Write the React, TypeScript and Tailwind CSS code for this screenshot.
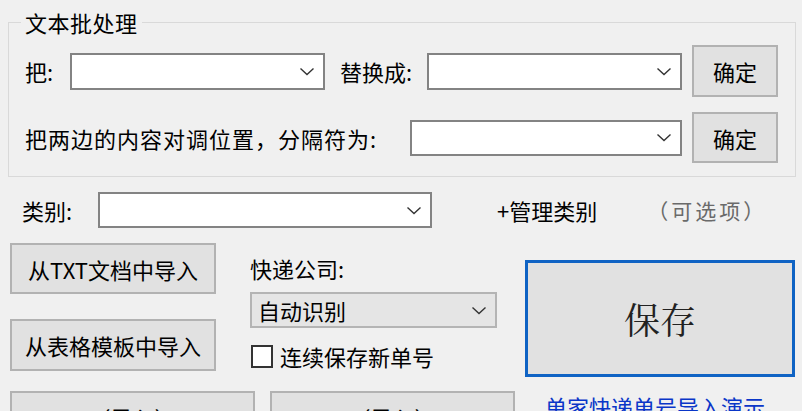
import React from "react";

const FONT = '"Noto Sans CJK SC", "Microsoft YaHei", sans-serif';

function Chevron() {
  return (
    <svg width="16" height="9" viewBox="0 0 16 9" className="shrink-0">
      <path d="M1.5 1.5 L8 7.5 L14.5 1.5" fill="none" stroke="#333" strokeWidth="1.4" />
    </svg>
  );
}

function Combo({ className, text, gray }: { className: string; text?: string; gray?: boolean }) {
  return (
    <div
      className={
        "flex items-center justify-between pr-[8px] pl-[6px] " +
        (gray ? "bg-[#e5e5e5] border-2 border-[#b4b4b4] " : "bg-white border-2 border-[#838383] ") +
        className
      }
    >
      <span className="text-[22px] leading-none text-black">{text}</span>
      <Chevron />
    </div>
  );
}

function Btn({ className, children }: { className: string; children: React.ReactNode }) {
  return (
    <button
      type="button"
      className={
        "flex items-center justify-center bg-[#e1e1e1] border-2 border-[#b2b2b2] text-[22px] leading-none text-black " +
        className
      }
    >
      {children}
    </button>
  );
}

export default function App() {
  return (
    <div
      className="w-[802px] h-[411px] overflow-hidden bg-[#f0f0f0] text-black"
      style={{ fontFamily: FONT }}
    >
      <fieldset className="ml-[8px] mt-[11px] w-[788px] h-[166px] border border-[#d9d9d9]">
        <legend className="ml-[12px] px-[4px] text-[22px] leading-[22px] tracking-[0.5px]">文本批处理</legend>

        <div className="mt-[12px] h-[52px] flex items-center pl-[16px]">
          <span className="w-[45px] text-[22px] leading-none">把:</span>
          <Combo className="w-[255px] h-[37px]" />
          <span className="w-[102px] pl-[15px] text-[22px] leading-none">替换成:</span>
          <Combo className="w-[255px] h-[37px]" />
          <Btn className="ml-[10px] w-[86px] h-[52px]">确定</Btn>
        </div>

        <div className="mt-[15px] h-[51px] flex items-center pl-[16px]">
          <span className="w-[385px] text-[22px] leading-none tracking-[1px]">把两边的内容对调位置，分隔符为:</span>
          <Combo className="w-[272px] h-[36px]" />
          <Btn className="ml-[10px] w-[86px] h-[51px]">确定</Btn>
        </div>
      </fieldset>

      <div className="mt-[15px] h-[36px] flex items-center pl-[22px]">
        <span className="w-[76px] text-[22px] leading-none">类别:</span>
        <Combo className="w-[334px] h-[36px]" />
        <span className="ml-[65px] text-[22px] leading-none">+管理类别</span>
        <span className="ml-[50px] text-[21px] leading-none tracking-[3px] text-[#6a6a6a]">（可选项）</span>
      </div>

      <div className="mt-[15px] flex pl-[10px]">
        <div className="w-[505px] flex flex-col">
          <div className="flex">
            <div className="w-[206px] flex flex-col gap-[25px]">
              <Btn className="w-[206px] h-[51px]">从TXT文档中导入</Btn>
              <Btn className="w-[206px] h-[52px]">从表格模板中导入</Btn>
            </div>
            <div className="ml-[34px] w-[247px] flex flex-col">
              <span className="mt-[14px] text-[22px] leading-[22px]">快递公司:</span>
              <Combo gray text="自动识别" className="mt-[13px] w-[247px] h-[36px]" />
              <label className="mt-[16px] h-[24px] flex items-center gap-[7px]">
                <span className="ml-[1px] w-[22px] h-[23px] bg-white border-2 border-[#333]" />
                <span className="text-[22px] leading-none">连续保存新单号</span>
              </label>
            </div>
          </div>
          <div className="mt-[20px] flex gap-[15px]">
            <Btn className="w-[245px] h-[51px]">（导入）</Btn>
            <Btn className="w-[245px] h-[51px]">（导入）</Btn>
          </div>
        </div>

        <div className="ml-[10px] w-[270px] flex flex-col">
          <button
            type="button"
            className="mt-[17px] h-[117px] w-[270px] bg-[#e1e1e1] border-[3px] border-[#0f63c4] flex items-center justify-center text-[36px] leading-none text-[#222]"
            style={{ fontFamily: '"Noto Serif CJK SC", "Noto Sans CJK SC", serif' }}
          >
            保存
          </button>
          <span className="mt-[16px] pl-[20px] text-[22px] leading-[26px] text-[#0a36c8] whitespace-nowrap">
            单家快递单号导入演示
          </span>
        </div>
      </div>
    </div>
  );
}
